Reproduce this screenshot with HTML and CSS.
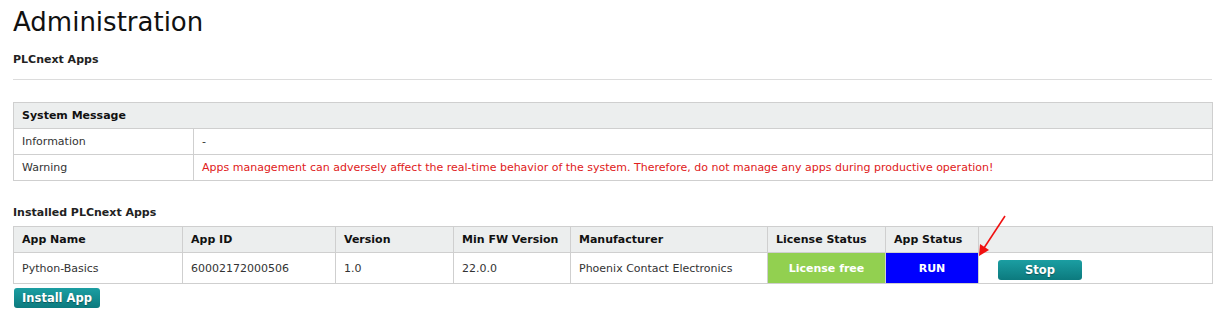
FILE: index.html
```html
<!DOCTYPE html>
<html lang="en">
<head>
    <meta charset="UTF-8">
    <title>Administration</title>
    <link rel="stylesheet" href="styles.css">
</head>
<body>

<div class="page">
    <h1 class="title">Administration</h1>
    <h3 class="section">PLCnext Apps</h3>
    <hr class="rule">

    <table class="grid msg">
        <tr>
            <th colspan="2">System Message</th>
        </tr>
        <tr>
            <td class="label">Information</td>
            <td>-</td>
        </tr>
        <tr>
            <td class="label">Warning</td>
            <td class="warn">Apps management can adversely affect the real-time behavior of the system. Therefore, do not manage any apps during productive operation!</td>
        </tr>
    </table>

    <h3 class="section sub">Installed PLCnext Apps</h3>
    <div class="apps-wrap">
        <table class="grid apps">
            <colgroup>
                <col style="width:169px">
                <col style="width:153px">
                <col style="width:118px">
                <col style="width:117px">
                <col style="width:197px">
                <col style="width:118px">
                <col style="width:93px">
                <col>
            </colgroup>
            <tr>
                <th>App Name</th>
                <th>App ID</th>
                <th>Version</th>
                <th>Min FW Version</th>
                <th>Manufacturer</th>
                <th>License Status</th>
                <th>App Status</th>
                <th></th>
            </tr>
            <tr class="row">
                <td>Python-Basics</td>
                <td>60002172000506</td>
                <td>1.0</td>
                <td>22.0.0</td>
                <td>Phoenix Contact Electronics</td>
                <td class="state lic">License free</td>
                <td class="state run">RUN</td>
                <td class="act"><button class="btn stop">Stop</button></td>
            </tr>
        </table>
        <!-- annotation arrow -->
        <svg class="arrow" width="40" height="50" viewBox="0 0 40 50">
            <line x1="35" y1="2" x2="14" y2="34" stroke="#f01010" stroke-width="1.6"/>
            <polygon points="9,42 10,30 19,36" fill="#f01010"/>
        </svg>
    </div>
    <button class="btn install">Install App</button>
</div>

</body>
</html>
```

FILE: styles.css
```css
* {
    box-sizing: border-box;
}

body {
    margin: 0;
    font-family: "DejaVu Sans", Verdana, sans-serif;
    font-size: 11px;
    color: #222;
    background: #fff;
}

.page {
    padding: 5px 13px 0 13px;
    width: 1226px;
}

.title {
    margin: 0;
    font-size: 26px;
    font-weight: normal;
    color: #111;
    line-height: 34px;
}

.section {
    margin: 14px 0 0 0;
    font-size: 11px;
    font-weight: bold;
    line-height: 14px;
}

.section.sub {
    margin: 25px 0 0 0;
}

.rule {
    border: 0;
    border-top: 1px solid #dcdcdc;
    margin: 12px 0 22px 0;
    width: 1199px;
}

.grid {
    border-collapse: collapse;
    width: 1200px;
}

.grid th,
.grid td {
    border: 1px solid #cfcfcf;
    padding: 0 8px;
    text-align: left;
}

.grid th {
    background: #eceeee;
    height: 26px;
    font-weight: bold;
    color: #111;
}

.grid td {
    height: 26px;
    color: #333;
}

.msg .label {
    width: 180px;
}

.msg .warn {
    color: #e02020;
}

.apps-wrap {
    position: relative;
    margin-top: 6px;
}

.apps .row td {
    height: 31px;
}

.apps td.state {
    color: #fff;
    font-weight: bold;
    text-align: center;
}

.apps td.lic {
    background: #92d050;
}

.apps td.run {
    background: #0000ff;
}

.apps td.act {
    padding: 4px 0 0 19px;
}

.btn {
    display: inline-block;
    border: 0;
    border-radius: 3px;
    background: linear-gradient(#1b9ea2, #0c7a7e);
    color: #fff;
    font-family: "DejaVu Sans", Verdana, sans-serif;
    font-weight: bold;
    font-size: 11.5px;
    text-shadow: 0 1px 1px rgba(0, 0, 0, .35);
    height: 20px;
    padding: 0;
    cursor: pointer;
}

.btn.stop {
    width: 84px;
}

.btn.install {
    width: 86px;
    margin: 4px 0 0 1px;
}

.arrow {
    position: absolute;
    left: 957px;
    top: -12px;
}
```
